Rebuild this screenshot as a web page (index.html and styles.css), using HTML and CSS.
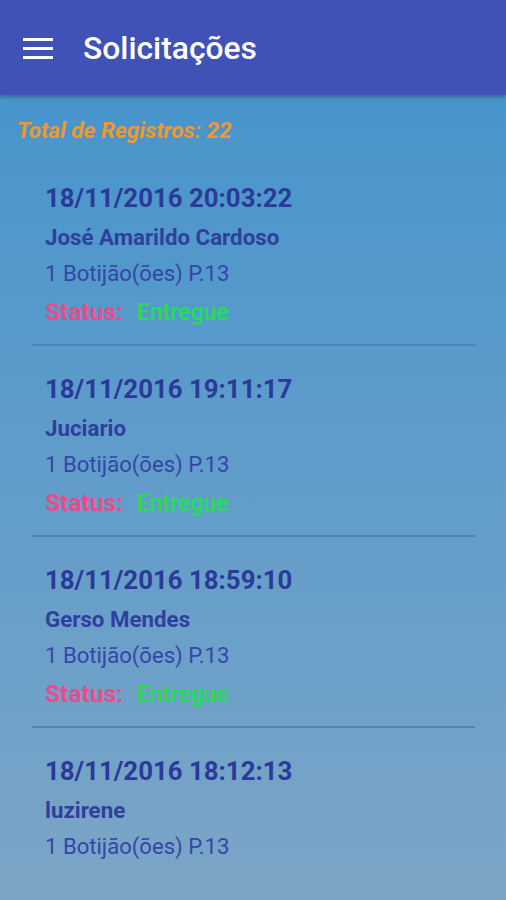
FILE: index.html
```html
<!DOCTYPE html>
<html lang="pt">
<head>
<meta charset="utf-8">
<title>Solicitações</title>
<link rel="stylesheet" href="styles.css">
</head>
<body>
<header class="toolbar">
  <svg class="menu" width="30" height="22" viewBox="0 0 30 22" aria-hidden="true">
    <rect x="0" y="0" width="30" height="3" fill="#fff"/>
    <rect x="0" y="9" width="30" height="3" fill="#fff"/>
    <rect x="0" y="18" width="30" height="3" fill="#fff"/>
  </svg>
  <h1 class="title">Solicitações</h1>
</header>
<main class="content">
  <p class="total">Total de Registros: 22</p>
  <ul class="list">
    <li class="item">
      <div class="date">18/11/2016 20:03:22</div>
      <div class="name">José Amarildo Cardoso</div>
      <div class="qty">1 Botijão(ões) P.13</div>
      <div class="status"><span class="status-label">Status:</span><span class="status-value">Entregue</span></div>
    </li>
    <li class="item">
      <div class="date">18/11/2016 19:11:17</div>
      <div class="name">Juciario</div>
      <div class="qty">1 Botijão(ões) P.13</div>
      <div class="status"><span class="status-label">Status:</span><span class="status-value">Entregue</span></div>
    </li>
    <li class="item">
      <div class="date">18/11/2016 18:59:10</div>
      <div class="name">Gerso Mendes</div>
      <div class="qty">1 Botijão(ões) P.13</div>
      <div class="status"><span class="status-label">Status:</span><span class="status-value">Entregue</span></div>
    </li>
    <li class="item">
      <div class="date">18/11/2016 18:12:13</div>
      <div class="name">luzirene</div>
      <div class="qty">1 Botijão(ões) P.13</div>
    </li>
  </ul>
</main>
</body>
</html>
```
FILE: styles.css
```css
* { box-sizing: border-box; }
html, body {
  margin: 0;
  padding: 0;
  height: 900px;
  overflow: hidden;
}
body {
  font-family: Roboto, "Noto Sans", sans-serif;
  background: linear-gradient(180deg, #4193cc 0px, #5c9bcb 400px, #7ba5c6 900px);
}
.toolbar {
  position: relative;
  z-index: 2;
  height: 95px;
  background: #4052b5;
  display: flex;
  align-items: center;
  padding-left: 23px;
  box-shadow: 0 2px 4px rgba(0, 0, 0, 0.3);
}
.menu {
  display: block;
  margin-top: 2px;
}
.title {
  margin: 0 0 0 30px;
  color: #fff;
  font-size: 31.8px;
  font-weight: 500;
  line-height: 40px;
}
.content {
  padding-top: 20px;
}
.total {
  margin: 0 0 10px 17px;
  font-size: 22.5px;
  line-height: 30px;
  font-weight: 700;
  font-style: italic;
  color: #f0982c;
}
.list {
  list-style: none;
  margin: 0;
  padding: 0;
}
.item {
  margin: 0 31px 0 32px;
  padding: 23px 0 10px 13px;
  border-bottom: 2px solid #4a86b8;
}
.item:last-child {
  border-bottom: none;
}
.date {
  height: 40px;
  font-size: 25.8px;
  line-height: 40px;
  font-weight: 700;
  color: #2b3a98;
}
.name {
  height: 38px;
  font-size: 22.3px;
  line-height: 38px;
  font-weight: 700;
  color: #2f3f9d;
}
.qty {
  height: 34px;
  font-size: 22.1px;
  line-height: 34px;
  color: #3546a8;
}
.status {
  height: 44px;
  line-height: 44px;
  display: flex;
  align-items: baseline;
}
.status-label {
  font-size: 24.5px;
  font-weight: 700;
  color: #ea4b8b;
  margin-right: 14px;
}
.status-value {
  font-size: 23px;
  font-weight: 500;
  color: #22e050;
}
```
